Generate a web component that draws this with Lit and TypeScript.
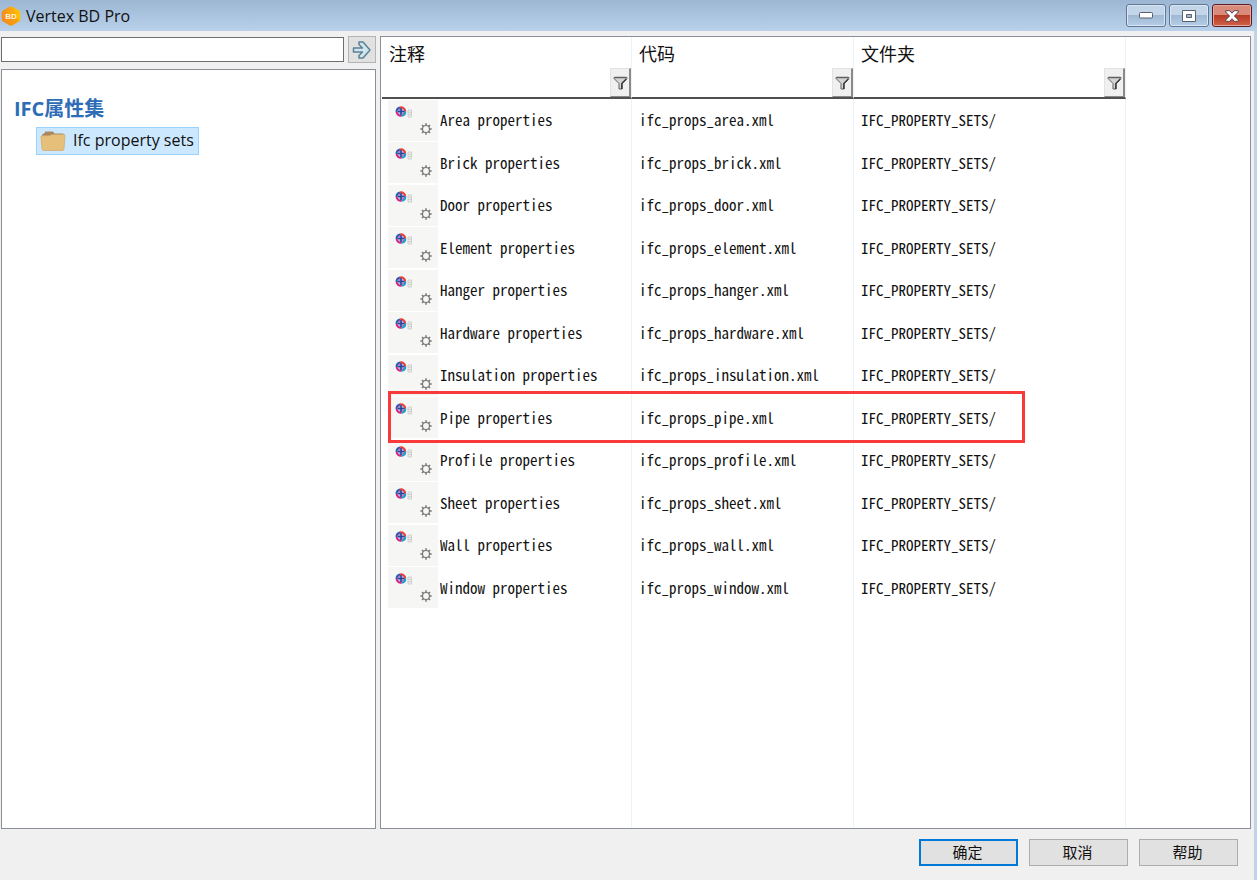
import { LitElement, html, css, svg } from "lit";
import { customElement, state } from "lit/decorators.js";

interface PropertySet {
  name: string;
  code: string;
  folder: string;
  marked?: boolean;
}

const NAMES = ["Area", "Brick", "Door", "Element", "Hanger", "Hardware", "Insulation", "Pipe", "Profile", "Sheet", "Wall", "Window"];

const SETS: PropertySet[] = NAMES.map((n) => ({
  name: `${n} properties`,
  code: `ifc_props_${n.toLowerCase()}.xml`,
  folder: "IFC_PROPERTY_SETS/",
  marked: n === "Pipe",
}));

const logoIcon = html`<svg width="20" height="20" viewBox="0 0 20 20" aria-hidden="true">
  <defs>
    <linearGradient id="lg" x1="0" y1="0" x2="1" y2="0">
      <stop offset="0" stop-color="#f58a1f" /><stop offset="1" stop-color="#ffc400" />
    </linearGradient>
  </defs>
  <path d="M10 .5 Q11 .5 12 1.100 L18 4.500 Q19.300 5.300 19.300 6.600 V13.400 Q19.300 14.700 18 15.500 L12 18.900 Q10 20 8 18.900 L2 15.500 Q.7 14.700 .7 13.400 V6.600 Q.7 5.300 2 4.500 L8 1.100 Q9 .5 10 .5Z" fill="url(#lg)" />
  <path d="M1 14.500 L10 9 L19 14.500 L12 18.900 Q10 20 8 18.900Z" fill="#f28a1c" opacity=".55" />
  <text x="10" y="13" text-anchor="middle" font-size="8" font-weight="700" fill="#fff3dc" font-family="Liberation Sans, sans-serif">BD</text>
</svg>`;

const goIcon = html`<svg width="20" height="20" viewBox="0 0 20 20" aria-hidden="true">
  <path d="M1.500 8 H10.500 L7 4.500 V2 H11 L18 10 L11 18 H7 V15.500 L10.500 12 H1.500Z" fill="#d0e6ef" stroke="#5d8094" stroke-width="1.500" stroke-linejoin="round" />
</svg>`;

const folderIcon = html`<svg width="26" height="22" viewBox="0 0 26 22" aria-hidden="true">
  <path d="M2 7 V4.500 L4 3.500 L5.500 1.500 H13 L14.500 3.500 H23 Q24 3.500 24 5 V10 H2Z" fill="#a98860" />
  <path d="M1 7 Q.8 5.800 2 5.800 H9 L12 4.500 H24 Q25.200 4.500 25 6 L24 19 Q23.800 20.500 22.500 20.500 H3.500 Q2.200 20.500 2 19Z" fill="#e6c07b" stroke="#cfa768" stroke-width=".7" />
</svg>`;

const filterIcon = html`<svg width="15" height="14" viewBox="0 0 15 14" aria-hidden="true">
  <path d="M1 1.500 H14 V2.500 L9.200 7.500 V13 H6 V7.500 L1 2.500Z" fill="#d4d4d4" stroke="#606060" stroke-linejoin="round" />
  <path d="M1.500 1.500 H13.500" stroke="#606060" stroke-width="1.500" />
  <path d="M13.300 3 L8.800 7.500 V13" fill="none" stroke="#3c3c3c" stroke-width="1.500" />
</svg>`;

const SPOKES = [0, 45, 90, 135, 180, 225, 270, 315];

const rowIcon = html`<svg width="50" height="41" viewBox="0 0 50 41" aria-hidden="true">
  <rect width="50" height="41" fill="#f6f6f5" />
  <g fill="none" stroke-width="2">
    <circle cx="13" cy="11.500" r="4.600" fill="#b9b4e0" stroke="none" />
    <path d="M8.600 12 A4.300 4.300 0 0 1 12 7.400" stroke="#2a5cb8" />
    <path d="M12 7.400 A4.300 4.300 0 0 1 17.300 11.500" stroke="#ee3d35" />
    <path d="M17.300 11.500 A4.300 4.300 0 0 1 13.500 15.800" stroke="#17a0cf" />
    <path d="M13.500 15.800 A4.300 4.300 0 0 1 8.600 12" stroke="#d5237f" />
    <path d="M13 8 V11.500 H16.500" stroke="#27459a" stroke-width="1.600" />
    <path d="M10 11.500 H13 V15" stroke="#27459a" stroke-width="1.600" />
    <path d="M10.500 9.500 H11.500 M14.500 13.500 H15.500" stroke="#e2447a" stroke-width="1.500" />
  </g>
  <path d="M20 10 H23.500 V17 H20Z M20 12.300 H23.500 M20 14.600 H23.500" fill="#eee" stroke="#cfcfcd" stroke-width="1" />
  <g stroke="#777" fill="none">
    <circle cx="38" cy="29" r="3.500" stroke-width="1.200" />
    ${SPOKES.map((a) => svg`<path d="M38 25.500 V23.300" stroke-width="1.500" transform="rotate(${a} 38 29)" />`)}
  </g>
</svg>`;

@customElement("app-root")
export class AppRoot extends LitElement {
  @state() private query = "";

  static styles = css`
    :host {
      display: flex;
      flex-direction: column;
      box-sizing: border-box;
      min-height: 100vh;
      background: #f0f0f0;
      border-right: 3px solid #bcd3ea;
      color: #111;
      font-family: "Open Sans", "Noto Sans CJK SC", sans-serif;
      font-size: 15px;
    }
    * { box-sizing: border-box; }
    svg { display: block; flex: none; }
    button { font: inherit; color: inherit; padding: 0; margin: 0; }

    .titlebar {
      display: flex;
      align-items: center;
      height: 31px;
      margin-right: -3px;
      padding: 0 5px 0 1px;
      background: linear-gradient(#9cb6d3, #b9d1ea);
    }
    .title { flex: 1; margin: 0 0 0 5px; font-size: 16px; font-weight: 400; line-height: 20px; }
    .caption { display: flex; gap: 3px; }
    .cap {
      display: grid;
      place-items: center;
      width: 40px;
      height: 23px;
      border: 1px solid #5f7793;
      border-radius: 3px;
      box-shadow: inset 0 0 0 1px #dbe7f4;
      background: linear-gradient(#c3d5e8 50%, #9fb8d4 50%, #b6cde6);
    }
    .close {
      border-color: #5c1a20;
      box-shadow: inset 0 0 0 1px #e4aaa0;
      background: linear-gradient(#d98a7b 50%, #b93a24 50%, #cf6249);
    }

    .work { flex: 1; display: flex; gap: 4px; padding: 5px 3px 0 1px; }
    .side { flex: none; display: flex; flex-direction: column; gap: 6px; width: 375px; }
    .search { display: flex; align-items: center; justify-content: space-between; gap: 4px; }
    .search input { flex: 1; min-width: 0; height: 25px; border: 1px solid #6e6e6e; padding: 0 4px; font: inherit; background: #fff; outline: none; }
    .go { display: grid; place-items: center; width: 28px; height: 27px; border: 1px solid #b4b4b4; background: #e1e1e1; }
    .pane { flex: 1; background: #fff; border: 1px solid #8b8f98; }
    .tree { padding: 24px 12px; }
    .tree h2 { margin: 0; color: #2e6db5; font-size: 20px; font-weight: 700; line-height: 30px; }
    .node {
      display: inline-flex;
      align-items: center;
      gap: 7px;
      height: 28px;
      margin: 3px 0 0 22px;
      padding: 0 4px 0 3px;
      border: 1px solid #99d1ff;
      background: #cce8ff;
      color: inherit;
      text-decoration: none;
      font-size: 16px;
      line-height: 24px;
    }
    .node span { padding-bottom: 2px; }

    .list { display: flex; flex-direction: column; min-width: 0; padding: 0 1px; }
    table { flex: 1; width: 100%; border-collapse: separate; border-spacing: 0; table-layout: fixed; }
    .c1 { width: 250px; }
    .c2 { width: 222px; }
    .c3 { width: 272px; }
    th, td { padding: 0; text-align: left; font-weight: 400; }
    th:not(:last-child), td:not(:last-child) { border-right: 1px solid #eaf3fb; }
    th:not(:last-child) { border-bottom: 2px solid #505050; }
    .head { display: flex; flex-direction: column; height: 60px; padding-left: 7px; }
    .head span { flex: 1; padding-top: 4px; font-size: 18px; line-height: 27px; }
    .filter {
      display: grid;
      place-items: center;
      align-self: flex-end;
      width: 21px;
      height: 30px;
      border: 1px solid #e3e3e3;
      border-right: 2px solid #8a8a8a;
      border-bottom: 1px solid #8a8a8a;
      background: #f0f0f0;
    }
    .row { height: 43px; }
    .row:nth-child(odd) { height: 42px; }
    .row td { padding-left: 7px; font-family: "Noto Sans Mono CJK SC", "Liberation Mono", monospace; font-size: 15px; line-height: 20px; white-space: nowrap; }
    .row .first { position: relative; padding-left: 6px; }
    .name { display: flex; align-items: center; gap: 2px; }
    .mark { position: absolute; z-index: 1; left: 6px; top: -5px; width: 637px; height: 52px; border: 3px solid #f93a3a; pointer-events: none; }

    .actions { display: flex; justify-content: flex-end; gap: 11px; padding: 10px 16px 14px; }
    .btn { width: 99px; height: 27px; border: 1px solid #adadad; padding: 0 2px 2px 0; background: #e1e1e1; font-size: 15px; line-height: 20px; }
    .primary { border: 2px solid #0078d7; }
  `;

  private heading(label: string) {
    return html`<th scope="col"><div class="head"><span>${label}</span><button class="filter" aria-label="${label}">${filterIcon}</button></div></th>`;
  }

  render() {
    return html`
      <header class="titlebar">
        ${logoIcon}
        <h1 class="title">Vertex BD Pro</h1>
        <div class="caption">
          <button class="cap" aria-label="Minimize"><svg width="14" height="7" viewBox="0 0 14 7"><rect x=".5" y=".5" width="13" height="5.500" rx="1" fill="#fff" stroke="#56606e" /></svg></button>
          <button class="cap" aria-label="Maximize"><svg width="14" height="12" viewBox="0 0 14 12"><path fill-rule="evenodd" d="M.5.5H13.500V11.500H.5Z M4.500 4.500V7.500H9.500V4.500Z" fill="#fff" stroke="#56606e" /></svg></button>
          <button class="cap close" aria-label="Close"><svg width="14" height="12" viewBox="0 0 14 12"><path d="M.7.7H4.700L7 3.200L9.300.7H13.300V2L9.400 6L13.300 10V11.300H9.300L7 8.800L4.700 11.300H.7V10L4.600 6L.7 2Z" fill="#fff" stroke="#5b4650" /></svg></button>
        </div>
      </header>
      <main class="work">
        <section class="side">
          <div class="search">
            <input type="text" aria-label="Search" .value=${this.query} @input=${(e: Event) => (this.query = (e.target as HTMLInputElement).value)} />
            <button class="go" aria-label="Go">${goIcon}</button>
          </div>
          <nav class="pane tree">
            <h2>IFC属性集</h2>
            <a class="node" href="#sets">${folderIcon}<span>Ifc property sets</span></a>
          </nav>
        </section>
        <section class="pane list">
          <table>
            <colgroup><col class="c1" /><col class="c2" /><col class="c3" /><col /></colgroup>
            <thead><tr>${["注释", "代码", "文件夹"].map((l) => this.heading(l))}<td></td></tr></thead>
            <tbody>
              ${SETS.map((s) => html`<tr class="row">
                <td class="first"><div class="name">${rowIcon}<span>${s.name}</span></div>${s.marked ? html`<div class="mark"></div>` : ""}</td>
                <td>${s.code}</td>
                <td>${s.folder}</td>
                <td></td>
              </tr>`)}
              <tr aria-hidden="true"><td></td><td></td><td></td><td></td></tr>
            </tbody>
          </table>
        </section>
      </main>
      <footer class="actions">
        <button class="btn primary">确定</button>
        <button class="btn">取消</button>
        <button class="btn">帮助</button>
      </footer>
    `;
  }
}
